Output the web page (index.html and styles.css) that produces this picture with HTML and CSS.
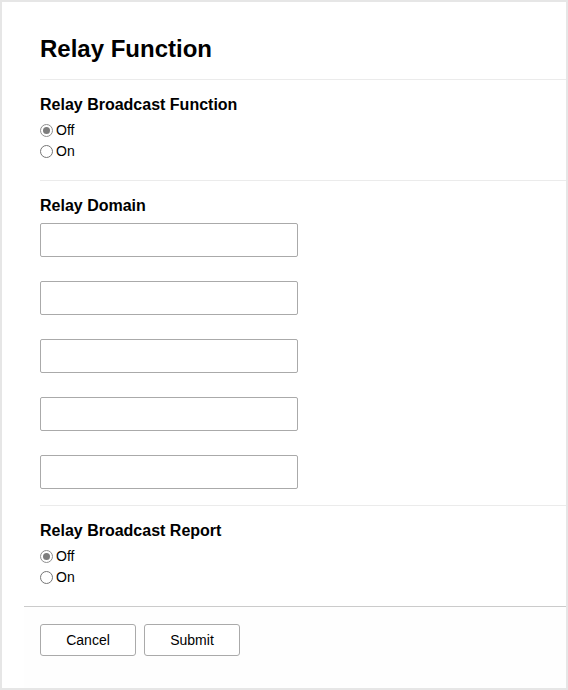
FILE: index.html
```html
<!DOCTYPE html>
<html lang="en">

<head>
    <meta charset="UTF-8">
    <meta name="viewport" content="width=device-width, initial-scale=1.0">
    <title>Relay Function</title>
    <link rel="stylesheet" href="styles.css">
</head>

<body>
    <div class="frame">
        <div class="content">
            <h1 class="page-title">Relay Function</h1>

            <div class="section">
                <h2>Relay Broadcast Function</h2>
                <label class="radio-row"><input type="radio" name="broadcast" checked> Off</label>
                <label class="radio-row"><input type="radio" name="broadcast"> On</label>
            </div>

            <div class="section section-domain">
                <h2>Relay Domain</h2>
                <div class="domain-list">
                    <input type="text" class="text-input">
                    <input type="text" class="text-input">
                    <input type="text" class="text-input">
                    <input type="text" class="text-input">
                    <input type="text" class="text-input">
                </div>
            </div>

            <div class="section section-last">
                <h2>Relay Broadcast Report</h2>
                <label class="radio-row"><input type="radio" name="report" checked> Off</label>
                <label class="radio-row"><input type="radio" name="report"> On</label>
            </div>
        </div>

        <div class="footer">
            <button type="button">Cancel</button>
            <button type="button">Submit</button>
        </div>
    </div>
</body>

</html>
```

FILE: styles.css
```css
html,
body {
    margin: 0;
    padding: 0;
}

body {
    font-family: Arial, "Liberation Sans", sans-serif;
    color: #000;
    background: #fff;
}

.frame {
    box-sizing: border-box;
    width: 568px;
    height: 690px;
    border: 2px solid #e6e6e6;
    background: #fff;
}

.content {
    padding: 33px 0 0 38px;
}

.page-title {
    margin: 0;
    font-size: 24px;
    line-height: 28px;
    font-weight: bold;
    padding-bottom: 16px;
    border-bottom: 1px solid #ebebeb;
}

.section {
    padding: 15px 0 18px;
    border-bottom: 1px solid #ebebeb;
}

.section h2 {
    margin: 0 0 6px;
    font-size: 16px;
    line-height: 19px;
    font-weight: bold;
}

.section-domain {
    padding-bottom: 16px;
}

.section-last {
    border-bottom: none;
}

.radio-row {
    display: flex;
    align-items: center;
    height: 21px;
    font-size: 14px;
    line-height: 21px;
}

.radio-row input {
    appearance: none;
    -webkit-appearance: none;
    box-sizing: border-box;
    width: 13px;
    height: 13px;
    margin: -1px 3px 0 0;
    border: 1px solid #767676;
    border-radius: 50%;
    background: #fff;
    position: relative;
}

.radio-row input:checked {
    border-color: #8f8f8f;
}

.radio-row input:checked::after {
    content: "";
    position: absolute;
    left: 2px;
    top: 2px;
    width: 7px;
    height: 7px;
    border-radius: 50%;
    background: #7d7d7d;
}

.domain-list {
    display: flex;
    flex-direction: column;
    gap: 24px;
    padding-top: 2px;
}

.text-input {
    box-sizing: border-box;
    width: 258px;
    height: 34px;
    margin: 0;
    border: 1px solid #aaa;
    border-radius: 2px;
    background: #fff;
}

.footer {
    display: flex;
    gap: 8px;
    margin: 0 0 0 22px;
    padding: 17px 0 0 16px;
    border-top: 1px solid #cbcbcb;
    background: #fefefe;
    height: 64px;
}

.footer button {
    box-sizing: border-box;
    width: 96px;
    height: 32px;
    border: 1px solid #aaa;
    border-radius: 3px;
    background: #fff;
    font-family: Arial, "Liberation Sans", sans-serif;
    font-size: 14px;
    color: #000;
    cursor: pointer;
}
```
